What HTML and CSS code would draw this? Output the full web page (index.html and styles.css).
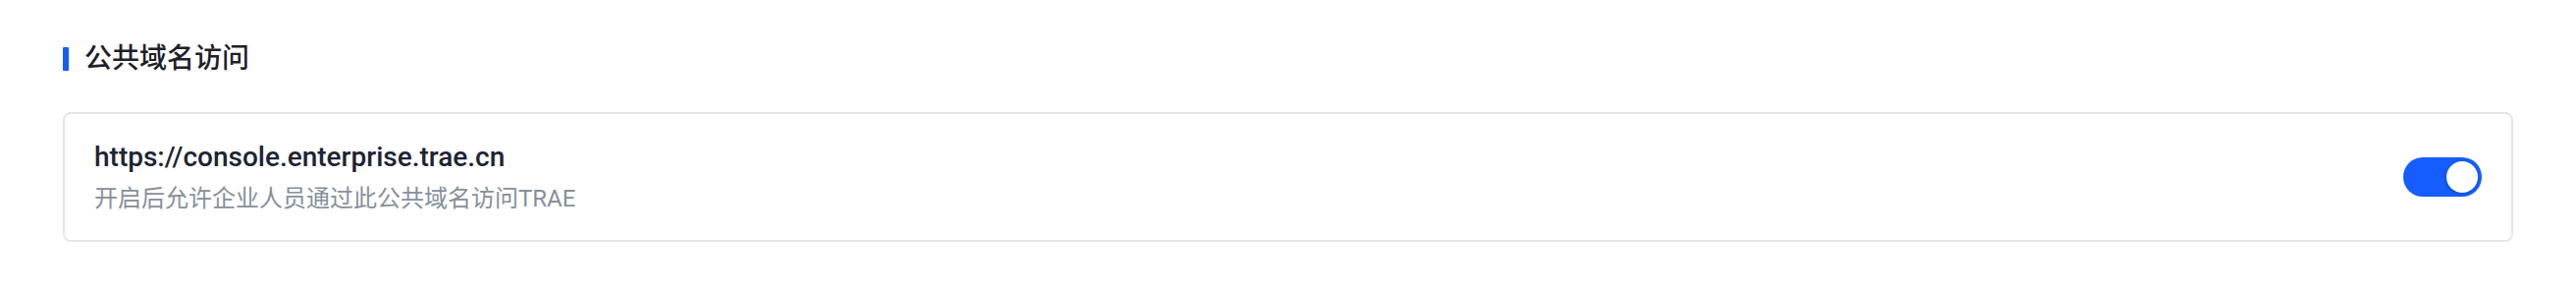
FILE: index.html
```html
<!DOCTYPE html>
<html lang="zh-CN">
<head>
    <meta charset="UTF-8">
    <meta name="viewport" content="width=device-width, initial-scale=1.0">
    <title>公共域名访问</title>
    <link rel="stylesheet" href="styles.css">
</head>
<body>
    <div class="page">
        <!-- 标题 -->
        <div class="section-title">
            <span class="title-bar"></span>
            <h2>公共域名访问</h2>
        </div>

        <!-- 域名设置卡片 -->
        <div class="domain-card">
            <div class="domain-info">
                <p class="domain-url">https://console.enterprise.trae.cn</p>
                <p class="domain-desc">开启后允许企业人员通过此公共域名访问TRAE</p>
            </div>
            <span class="switch is-on"><span class="switch-dot"></span></span>
        </div>
    </div>
</body>
</html>
```

FILE: styles.css
```css
body {
    margin: 0;
    background-color: #fff;
    font-family: Roboto, "Noto Sans CJK SC", sans-serif;
    color: #1d2129;
}
.page {
    padding: 38px 64px 0;
}
.section-title {
    display: flex;
    align-items: center;
    height: 44px;
    margin-bottom: 32px;
}
.title-bar {
    width: 6px;
    height: 24px;
    border-radius: 1px;
    background-color: #165dff;
    margin-right: 16px;
}
.section-title h2 {
    margin: 0;
    font-size: 28px;
    line-height: 44px;
    font-weight: 500;
    color: #1d2129;
}
.domain-card {
    display: flex;
    align-items: center;
    justify-content: space-between;
    height: 132px;
    box-sizing: border-box;
    padding: 0 30px;
    border: 2px solid #e5e6eb;
    border-radius: 8px;
    background-color: #fff;
}
.domain-info p {
    margin: 0;
}
.domain-url {
    font-size: 28px;
    line-height: 44px;
    font-weight: 500;
    color: #1d2433;
}
.domain-desc {
    font-size: 24px;
    line-height: 40px;
    color: #86909c;
}
.switch {
    position: relative;
    width: 80px;
    height: 40px;
    border-radius: 20px;
    background-color: #c9cdd4;
}
.switch.is-on {
    background-color: #165dff;
}
.switch-dot {
    position: absolute;
    top: 4px;
    left: 4px;
    width: 32px;
    height: 32px;
    border-radius: 50%;
    background-color: #fff;
    box-shadow: -1px 1px 3px rgba(0, 0, 0, 0.25);
}
.switch.is-on .switch-dot {
    left: 44px;
}
```
